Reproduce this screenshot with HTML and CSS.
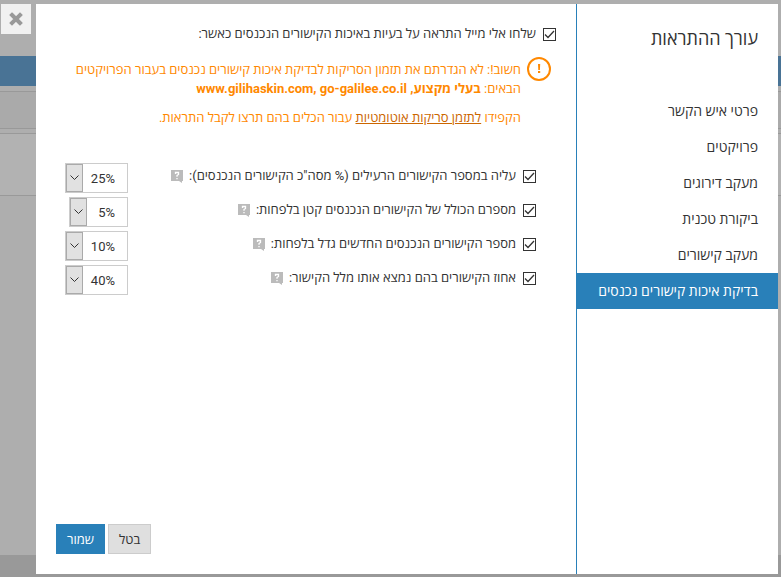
FILE: index.html
```html
<!DOCTYPE html>
<html lang="he" dir="rtl">
<head>
  <meta charset="utf-8">
  <title>עורך ההתראות</title>
  <link rel="stylesheet" href="styles.css">
</head>
<body>
  <div class="page">
    <div class="page-top"></div>
    <div class="page-bar"></div>
    <div class="page-box"></div>
    <div class="page-box tall"></div>
    <div class="page-footer"></div>
  </div>

  <div class="popup">
    <aside class="sidebar">
      <h1>עורך ההתראות</h1>
      <nav>
        <a href="#">פרטי איש הקשר</a>
        <a href="#">פרויקטים</a>
        <a href="#">מעקב דירוגים</a>
        <a href="#">ביקורת טכנית</a>
        <a href="#">מעקב קישורים</a>
        <a href="#" class="active">בדיקת איכות קישורים נכנסים</a>
      </nav>
    </aside>

    <main class="content">
      <label class="check"><input type="checkbox" checked>שלחו אלי מייל התראה על בעיות באיכות הקישורים הנכנסים כאשר:</label>

      <div class="notice">
        <svg class="notice-icon" width="24" height="24" viewBox="0 0 24 24">
          <circle cx="12" cy="12" r="11" fill="none" stroke="#ff8800" stroke-width="2"/>
          <path d="M11 7h2.200l-.3 6h-1.600z M11 14h2.200v2h-2.200z" fill="#ff8800"/>
        </svg>
        <div class="notice-text">
          <p>חשוב!: לא הגדרתם את תזמון הסריקות לבדיקת איכות קישורים נכנסים בעבור הפרויקטים הבאים: <b>בעלי מקצוע, www.gilihaskin.com, go-galilee.co.il</b></p>
          <p>הקפידו <a href="#">לתזמן סריקות אוטומטיות</a> עבור הכלים בהם תרצו לקבל התראות.</p>
        </div>
      </div>

      <div class="rules">
        <div class="rule">
          <label class="check"><input type="checkbox" checked>עליה במספר הקישורים הרעילים (% מסה"כ הקישורים הנכנסים):</label>
          <svg class="help" width="12" height="13" viewBox="0 0 12 13"><path d="M0 0h12v11h-1v2l-3-2H0z" fill="#bbb"/><path d="M4.500 4V2.500h3V4.500L6 5.500v1.200M6 8v1.300" fill="none" stroke="#fff" stroke-width="1.300"/></svg>
          <div class="picker-cell">
            <div class="picker">
              <select aria-label="עליה במספר הקישורים הרעילים"><option>25%</option></select>
              <span class="arrow"><svg width="9" height="6" viewBox="0 0 9 6"><path d="M.5.5l4 4 4-4" fill="none" stroke="#333"/></svg></span>
            </div>
          </div>
        </div>
        <div class="rule">
          <label class="check"><input type="checkbox" checked>מספרם הכולל של הקישורים הנכנסים קטן בלפחות:</label>
          <svg class="help" width="12" height="13" viewBox="0 0 12 13"><path d="M0 0h12v11h-1v2l-3-2H0z" fill="#bbb"/><path d="M4.500 4V2.500h3V4.500L6 5.500v1.200M6 8v1.300" fill="none" stroke="#fff" stroke-width="1.300"/></svg>
          <div class="picker-cell">
            <div class="picker">
              <select aria-label="מספרם הכולל של הקישורים הנכנסים"><option>5%</option></select>
              <span class="arrow"><svg width="9" height="6" viewBox="0 0 9 6"><path d="M.5.5l4 4 4-4" fill="none" stroke="#333"/></svg></span>
            </div>
          </div>
        </div>
        <div class="rule">
          <label class="check"><input type="checkbox" checked>מספר הקישורים הנכנסים החדשים גדל בלפחות:</label>
          <svg class="help" width="12" height="13" viewBox="0 0 12 13"><path d="M0 0h12v11h-1v2l-3-2H0z" fill="#bbb"/><path d="M4.500 4V2.500h3V4.500L6 5.500v1.200M6 8v1.300" fill="none" stroke="#fff" stroke-width="1.300"/></svg>
          <div class="picker-cell">
            <div class="picker">
              <select aria-label="מספר הקישורים הנכנסים החדשים"><option>10%</option></select>
              <span class="arrow"><svg width="9" height="6" viewBox="0 0 9 6"><path d="M.5.5l4 4 4-4" fill="none" stroke="#333"/></svg></span>
            </div>
          </div>
        </div>
        <div class="rule">
          <label class="check"><input type="checkbox" checked>אחוז הקישורים בהם נמצא אותו מלל הקישור:</label>
          <svg class="help" width="12" height="13" viewBox="0 0 12 13"><path d="M0 0h12v11h-1v2l-3-2H0z" fill="#bbb"/><path d="M4.500 4V2.500h3V4.500L6 5.500v1.200M6 8v1.300" fill="none" stroke="#fff" stroke-width="1.300"/></svg>
          <div class="picker-cell">
            <div class="picker">
              <select aria-label="אחוז הקישורים"><option>40%</option></select>
              <span class="arrow"><svg width="9" height="6" viewBox="0 0 9 6"><path d="M.5.5l4 4 4-4" fill="none" stroke="#333"/></svg></span>
            </div>
          </div>
        </div>
      </div>

      <div class="buttons">
        <button class="btn cancel">בטל</button>
        <button class="btn save">שמור</button>
      </div>
    </main>
  </div>

  <button class="close" aria-label="סגור">
    <svg width="14" height="14" viewBox="0 0 14 14"><path d="M3 3l8 8M11 3l-8 8" stroke="#999" stroke-width="4" stroke-linecap="square"/></svg>
  </button>
</body>
</html>
```

FILE: styles.css
```css
* {
  box-sizing: border-box;
}

body {
  margin: 0;
  font-family: Roboto, "Open Sans", "Noto Sans", sans-serif;
  font-size: 13px;
  color: #333;
}

/* dimmed page behind the popup */
.page {
  display: flex;
  flex-direction: column;
  min-height: 100vh;
  background-color: #aeaeae;
}

.page-top {
  height: 56px;
}

.page-bar {
  height: 30px;
  margin-bottom: 5px;
  background-color: #497395;
}

.page-box {
  height: 38px;
  margin-bottom: 4px;
  border-top: 1px solid #999;
  border-bottom: 1px solid #999;
  background-color: #aaa;
}

.page-box.tall {
  height: 63px;
  background-color: #b2b2b2;
}

.page-footer {
  height: 22px;
  margin-top: auto;
  background-color: #999;
}

.popup {
  position: absolute;
  top: 4px;
  right: 3px;
  bottom: 3px;
  left: 36px;
  display: flex;
  background-color: #fff;
}

.close {
  position: absolute;
  top: 4px;
  left: 1px;
  display: flex;
  align-items: center;
  justify-content: center;
  width: 30px;
  height: 30px;
  padding: 0;
  border: none;
  background-color: #f1f1f1;
  cursor: pointer;
}

/* sidebar */
.sidebar {
  flex: none;
  width: 202px;
  border-left: 1px solid #2980b9;
}

.sidebar h1 {
  margin: 21px 20px 40px;
  font-size: 18px;
  font-weight: normal;
  line-height: 28px;
}

.sidebar a {
  display: block;
  padding: 0 20px;
  font-size: 14px;
  line-height: 36px;
  color: #333;
  text-decoration: none;
  white-space: nowrap;
}

.sidebar a.active {
  background-color: #2980b9;
  color: #fff;
}

/* content */
.content {
  flex: 1;
  display: flex;
  flex-direction: column;
  padding: 20px;
}

.check {
  display: flex;
  align-items: center;
  gap: 7px;
  line-height: 20px;
}

.check input {
  appearance: none;
  flex: none;
  width: 13px;
  height: 13px;
  margin: 0;
  border: 1px solid #333;
  background: #fff url("data:image/svg+xml,%3Csvg xmlns='http://www.w3.org/2000/svg' viewBox='0 0 11 11'%3E%3Cpath d='M1 5.500l3 3 6-6.500' fill='none' stroke='%23333' stroke-width='1.300'/%3E%3C/svg%3E") center / 11px 11px no-repeat;
}

.notice {
  display: flex;
  gap: 6px;
  margin-top: 13px;
  padding: 0 5px;
  color: #ff8800;
}

.notice-icon {
  flex: none;
}

.notice-text {
  padding-top: 3px;
}

.notice p {
  margin: 0 0 10px;
  line-height: 19px;
}

.notice a {
  color: #cc6600;
}

.rules {
  margin-top: 26px;
  padding-right: 20px;
}

.rule {
  display: flex;
  align-items: flex-start;
  margin-bottom: 4px;
}

.rule .check {
  line-height: 26px;
}

.help {
  margin: 7px 6px 0 0;
}

.picker-cell {
  display: flex;
  width: 63px;
  margin-right: auto;
  margin-left: 9px;
}

.picker {
  display: flex;
  height: 30px;
  border: 1px solid #ccc;
}

.picker select {
  appearance: none;
  min-width: 40px;
  padding: 0 12px 0 7px;
  border: none;
  background-color: #fff;
  font-family: inherit;
  font-size: 13px;
  color: #333;
  direction: rtl;
}

.arrow {
  display: flex;
  align-items: center;
  justify-content: center;
  width: 17px;
  border: 1px solid #aaa;
  background-color: #e1e1e1;
}

.buttons {
  display: flex;
  justify-content: flex-end;
  gap: 3px;
  margin-top: auto;
}

.btn {
  height: 30px;
  padding: 0 10px;
  border: 1px solid #ccc;
  background-color: #dfdfdf;
  font-family: inherit;
  font-size: 13px;
  color: #333;
  cursor: pointer;
}

.btn.save {
  border-color: #2980b9;
  background-color: #2980b9;
  color: #fff;
}
```
